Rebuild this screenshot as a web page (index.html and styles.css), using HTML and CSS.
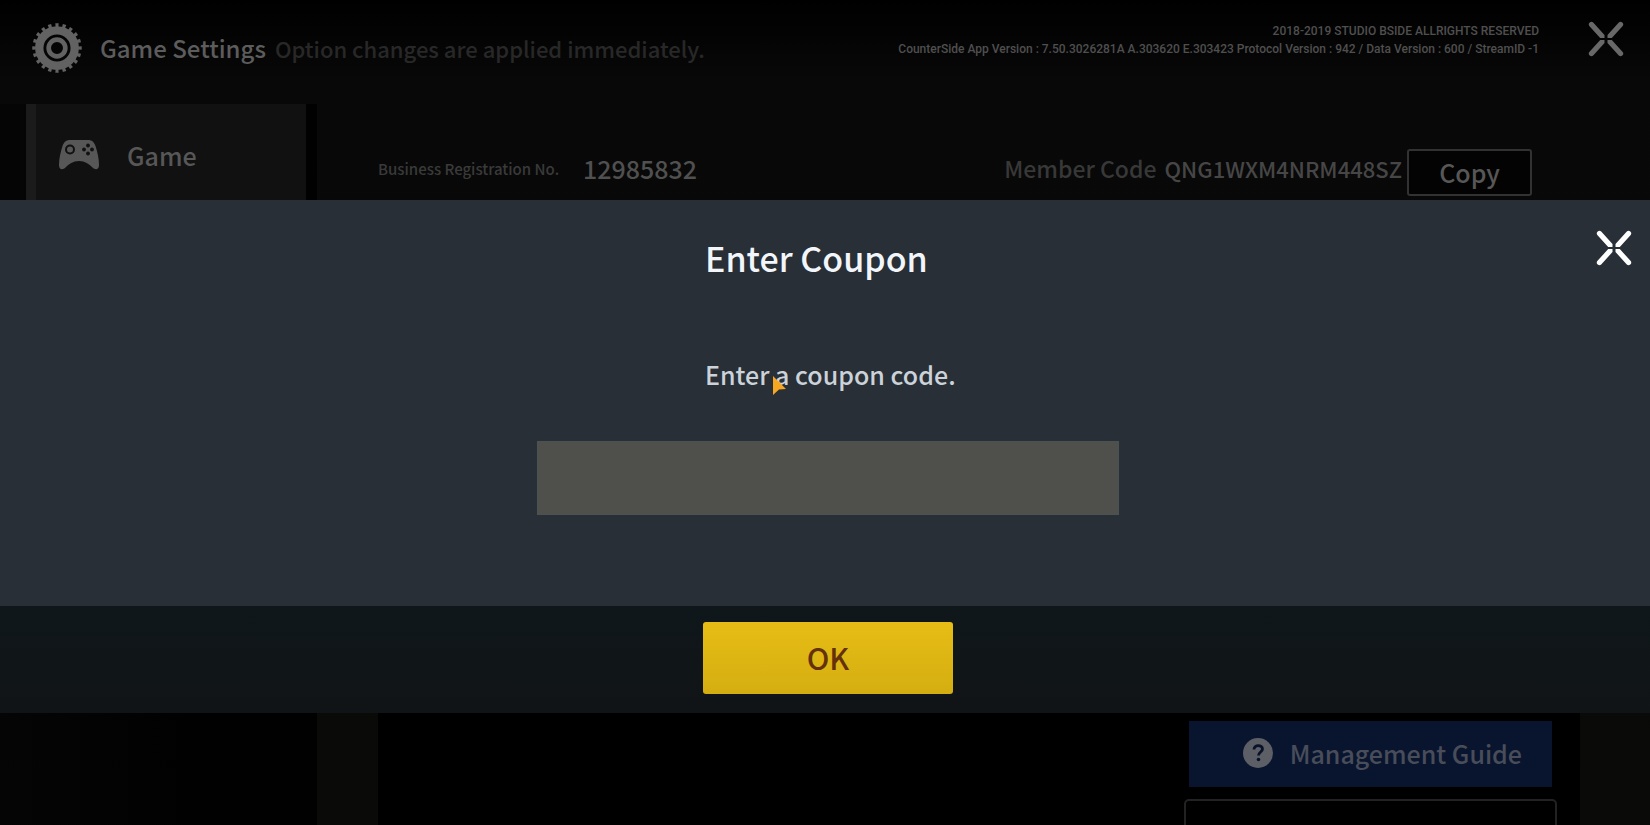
FILE: index.html
```html
<!DOCTYPE html>
<html lang="en">
<head>
<meta charset="utf-8">
<title>Game Settings</title>
<link rel="stylesheet" href="styles.css">
</head>
<body>
<svg class="defs" aria-hidden="true">
  <symbol id="cross" viewBox="0 0 36 36">
    <path id="arm" d="M1.300 4.900A2.600 2.600 0 0 1 5.200 1.500L16.500 14V17H12.200Z"/>
    <use href="#arm" transform="matrix(-1 0 0 1 36 0)"/>
    <use href="#arm" transform="matrix(1 0 0 -1 0 36)"/>
    <use href="#arm" transform="matrix(-1 0 0 -1 36 36)"/>
  </symbol>
</svg>
<div class="settings">
  <header class="topbar">
    <svg class="gear" viewBox="0 0 48 48" aria-hidden="true">
      <circle cx="24" cy="24" r="17" fill="none" stroke="currentColor" stroke-width="8"/>
      <circle cx="24" cy="24" r="22" fill="none" stroke="currentColor" stroke-width="3.500" pathLength="200" stroke-dasharray="4.500 5.500" stroke-dashoffset="2.250"/>
      <circle cx="24" cy="24" r="8" fill="none" stroke="currentColor" stroke-width="4.500"/>
    </svg>
    <h1 class="topbar-title">Game Settings</h1>
    <p class="topbar-note">Option changes are applied immediately.</p>
    <div class="version">
      <p>2018-2019 STUDIO BSIDE ALLRIGHTS RESERVED</p>
      <p>CounterSide App Version : 7.50.3026281A A.303620 E.303423 Protocol Version : 942 / Data Version : 600 / StreamID -1</p>
    </div>
    <button class="close" type="button" aria-label="Close settings">
      <svg viewBox="0 0 36 36" aria-hidden="true"><use href="#cross"/></svg>
    </button>
  </header>
  <div class="columns">
    <nav class="sidebar">
      <a class="tab" href="#game">
        <svg class="pad" viewBox="0 0 40 30" aria-hidden="true">
          <path fill="currentColor" d="M11 0h18c4 0 6 2 7.500 6C38.500 12 40 19 40 25c0 5-4 5-6.500 2.500C30 24 26 21 20 21S10 24 6.500 27.500C4 30 0 30 0 25 0 19 1.500 12 3.500 6 5 2 7 0 11 0z"/>
          <circle cx="11" cy="9.500" r="4" fill="none" stroke="#111" stroke-width="2"/>
          <g fill="#111"><circle cx="29" cy="5.500" r="1.900"/><circle cx="29" cy="13.500" r="1.900"/><circle cx="25" cy="9.500" r="1.900"/><circle cx="33" cy="9.500" r="1.900"/></g>
        </svg>
        <span>Game</span>
      </a>
    </nav>
    <main class="content" id="game">
      <div class="account">
        <div class="account-info">
          <span class="reg-label">Business Registration No.</span>
          <span class="reg-number">12985832</span>
          <span class="member-label">Member Code</span>
          <span class="member-code">QNG1WXM4NRM448SZ</span>
        </div>
        <button class="copy" type="button">Copy</button>
      </div>
      <div class="panel">
        <button class="guide" type="button">
          <svg class="help" viewBox="0 0 30 30" aria-hidden="true">
            <circle cx="15" cy="15" r="15" fill="currentColor"/>
            <path d="M11 11.500c0-5 8.500-5 8.500-.5 0 3-4 3-4 6.500" fill="none" stroke="#08132a" stroke-width="2.800"/>
            <circle cx="15.500" cy="21.500" r="1.800" fill="#08132a"/>
          </svg>
          <span>Management Guide</span>
        </button>
        <button class="outlined" type="button" aria-label="More options"></button>
      </div>
    </main>
  </div>
</div>

<section class="modal" role="dialog" aria-modal="true" aria-labelledby="coupon-title">
  <button class="close modal-close" type="button" aria-label="Close">
    <svg viewBox="0 0 36 36" aria-hidden="true"><use href="#cross"/></svg>
  </button>
  <div class="modal-body">
    <div class="modal-text">
      <h2 class="modal-title" id="coupon-title">Enter Coupon</h2>
      <label class="modal-label" for="coupon">Enter a coupon code.
        <svg class="pointer" viewBox="0 0 14 20" aria-hidden="true"><path fill="#f6a823" d="M1 0 14 13 7 13.500 1 19z"/></svg>
      </label>
    </div>
    <input class="coupon" id="coupon" type="text">
  </div>
  <div class="modal-foot">
    <button class="ok" type="button">OK</button>
  </div>
</section>
</body>
</html>
```
FILE: styles.css
```css
* {
  box-sizing: border-box;
}

body {
  margin: 0;
  background: #000;
  font-family: "Noto Sans CJK KR", "Noto Sans CJK SC", sans-serif;
  font-weight: 500;
  line-height: 1;
}

h1, h2, p {
  margin: 0;
  font-weight: 500;
}

button, input {
  font: inherit;
}

.defs {
  position: absolute;
  width: 0;
  height: 0;
}

.settings {
  display: flex;
  flex-direction: column;
  height: 100vh;
  overflow: hidden;
  background: linear-gradient(#000, #080808 80px, #0a0a09);
}

.topbar {
  display: flex;
  align-items: center;
  flex: none;
  height: 104px;
  padding: 0 26px 8px 32px;
  white-space: nowrap;
}

.gear {
  width: 50px;
  height: 50px;
  color: #626262;
}

.topbar-title {
  margin-left: 18px;
  font-size: 24px;
  color: #5c5c5c;
}

.topbar-note {
  margin-left: 9px;
  font-size: 22px;
  color: #282828;
}

.version {
  margin-left: auto;
  padding-bottom: 16px;
  text-align: right;
  font-family: Roboto, sans-serif;
  font-size: 12px;
  font-weight: 400;
  line-height: 18px;
  color: #4f4f4f;
}

.close {
  display: block;
  width: 36px;
  height: 36px;
  margin: 0 0 18px 49px;
  padding: 0;
  border: 0;
  background: none;
  color: #686868;
}

.close svg {
  display: block;
  fill: currentColor;
}

.columns {
  display: flex;
  flex: 1;
  min-height: 0;
}

.sidebar {
  flex: none;
  width: 317px;
  padding: 0 11px 0 26px;
  background: linear-gradient(90deg, #050505, #010101 60%);
}

.tab {
  display: flex;
  align-items: center;
  gap: 28px;
  height: 104px;
  padding: 0 24px 2px 23px;
  border-left: 10px solid #1b1b1b;
  background: #111;
  color: #575757;
  font-size: 25px;
  text-decoration: none;
}

.pad {
  width: 40px;
  height: 30px;
}

.content {
  display: flex;
  flex-direction: column;
  flex: 1;
  padding: 0 70px 0 61px;
}

.account {
  display: flex;
  align-items: center;
  flex: none;
  height: 136px;
  padding-right: 48px;
  white-space: nowrap;
}

.account-info {
  display: flex;
  align-items: center;
  flex: 1;
  padding-bottom: 8px;
}

.reg-label {
  font-size: 15px;
  color: #3a3a3a;
}

.reg-number {
  margin-left: 24px;
  font-size: 25px;
  color: #505050;
}

.member-label {
  margin-left: auto;
  font-size: 23px;
  color: #383838;
}

.member-code {
  margin-left: 8px;
  font-size: 22px;
  color: #464646;
}

.copy {
  width: 125px;
  height: 47px;
  margin-left: 5px;
  padding: 0;
  border: 2px solid #323232;
  border-radius: 3px;
  background: #030303;
  color: #575757;
  font-size: 25px;
}

.panel {
  display: flex;
  flex-direction: column;
  align-items: flex-end;
  justify-content: flex-end;
  flex: 1;
  padding-right: 23px;
  background: #000;
}

.guide {
  display: flex;
  align-items: center;
  justify-content: flex-end;
  gap: 17px;
  flex: none;
  width: 363px;
  height: 66px;
  margin: 0 5px 12px 0;
  padding: 0 30px 2px 0;
  border: 0;
  background: #09152f;
  color: #484d59;
  font-size: 25px;
}

.help {
  width: 30px;
  height: 30px;
  color: #5c5f65;
}

.outlined {
  flex: none;
  width: 373px;
  height: 66px;
  margin-bottom: -40px;
  border: 2px solid #222;
  border-radius: 5px;
  background: #000;
}

.modal {
  position: absolute;
  top: 200px;
  left: 0;
  right: 0;
  background: #282f36;
}

.modal-close {
  position: absolute;
  top: 30px;
  right: 18px;
  margin: 0;
  color: #fff;
}

.modal-body {
  display: flex;
  flex-direction: column;
  align-items: center;
  padding: 34px 0 91px 6px;
}

.modal-text {
  display: flex;
  flex-direction: column;
  gap: 72px;
  width: 250px;
  padding-left: 2px;
  white-space: nowrap;
}

.modal-title {
  font-size: 34px;
  line-height: 48px;
  color: #f2f6fb;
}

.modal-label {
  position: relative;
  font-size: 25px;
  line-height: 40px;
  color: #ccd2d9;
}

.pointer {
  position: absolute;
  top: 22px;
  left: 67px;
  width: 14px;
  height: 20px;
}

.coupon {
  width: 582px;
  max-width: 90%;
  height: 74px;
  margin-top: 47px;
  padding: 0 20px;
  border: 1px solid #4b5252;
  background: #4f4f4b;
  color: #fff;
  font-size: 25px;
}

.modal-foot {
  display: flex;
  justify-content: center;
  padding: 16px 0 19px 6px;
  background: linear-gradient(#0f171a, #111416);
}

.ok {
  width: 250px;
  height: 72px;
  padding: 0 0 2px;
  border: 0;
  border-radius: 3px;
  background: linear-gradient(#e7bd15, #d4ae11);
  color: #64310b;
  font-size: 30px;
}
```
